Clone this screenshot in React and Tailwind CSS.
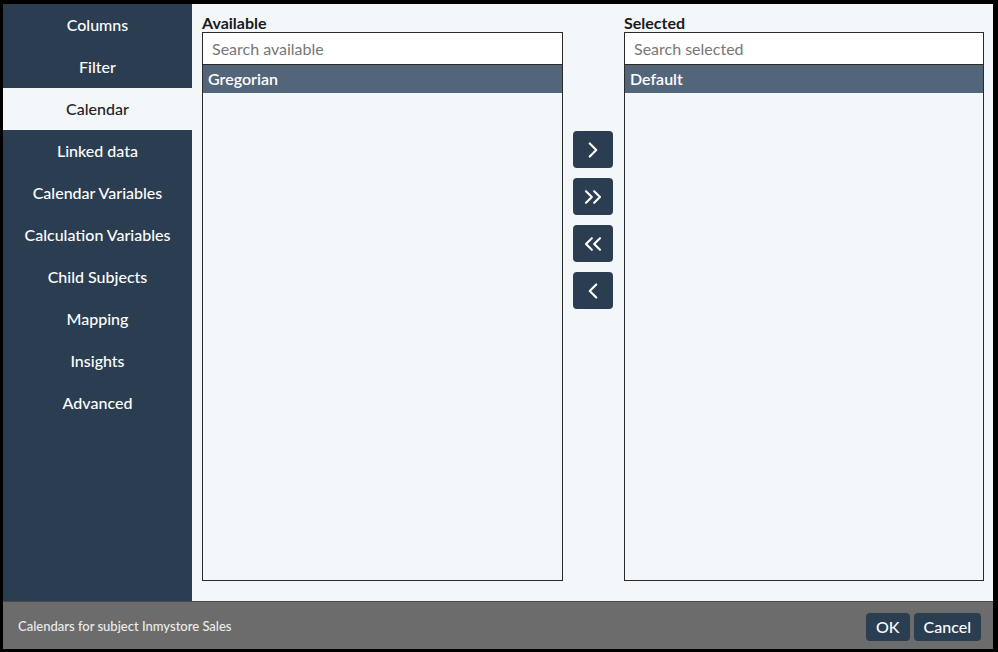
import React, { useState } from "react";
import { ChevronLeft, ChevronRight, ChevronsLeft, ChevronsRight } from "lucide-react";

const NAV = [
  "Columns",
  "Filter",
  "Calendar",
  "Linked data",
  "Calendar Variables",
  "Calculation Variables",
  "Child Subjects",
  "Mapping",
  "Insights",
  "Advanced"
];

function ListBox({ placeholder, items }) {
  return (
    <div className="flex h-[549px] flex-col border border-[#2a2a2a] bg-[#f3f7fa]">
      <input
        className="h-[32px] shrink-0 border-b border-[#2a2a2a] bg-white px-[9px] text-[16px] text-[#333] outline-none placeholder:text-[#777]"
        placeholder={placeholder}
      />
      {items.map((it) => (
        <div
          key={it}
          className="flex h-[28px] items-center bg-[#536579] px-[5px] text-[16px] font-semibold text-white"
        >
          {it}
        </div>
      ))}
    </div>
  );
}

function MoveButton({ children }) {
  return (
    <button className="flex h-[37px] w-[40px] items-center justify-center rounded-[4px] bg-[#2b3d51] text-white">
      {children}
    </button>
  );
}

export default function App() {
  const [page, setPage] = useState("Calendar");

  return (
    <div
      className="flex h-[652px] w-[998px] flex-col bg-black pt-[4px] pb-[3px] pl-[3px] pr-[5px]"
      style={{ fontFamily: "Lato, 'Noto Sans', sans-serif" }}
    >
      <div className="flex min-h-0 flex-1">
        <div className="w-[189px] shrink-0 bg-[#2b3d51]">
          {NAV.map((n) => (
            <button
              key={n}
              onClick={() => setPage(n)}
              className={`flex h-[42px] w-full items-center justify-center text-[16px] font-medium ${
                page === n ? "bg-[#f3f7fa] text-[#222]" : "text-white"
              }`}
            >
              {n}
            </button>
          ))}
        </div>
        <div className="flex flex-1 bg-[#f3f7fa] pt-[10px] pl-[10px]">
          <div className="w-[361px]">
            <div className="h-[18px] text-[16px] font-bold leading-[18px] text-[#1a1a1a]">Available</div>
            <ListBox placeholder="Search available" items={["Gregorian"]} />
          </div>
          <div className="ml-[10px] flex w-[40px] flex-col gap-[10px] pt-[117px]">
            <MoveButton>
              <ChevronRight size={26} strokeWidth={2} />
            </MoveButton>
            <MoveButton>
              <ChevronsRight size={28} strokeWidth={1.8} />
            </MoveButton>
            <MoveButton>
              <ChevronsLeft size={28} strokeWidth={1.8} />
            </MoveButton>
            <MoveButton>
              <ChevronLeft size={26} strokeWidth={2} />
            </MoveButton>
          </div>
          <div className="ml-[11px] w-[360px]">
            <div className="h-[18px] text-[16px] font-bold leading-[18px] text-[#1a1a1a]">Selected</div>
            <ListBox placeholder="Search selected" items={["Default"]} />
          </div>
        </div>
      </div>
      <div className="flex h-[48px] shrink-0 items-center justify-between border-t border-[#4a4a4a] bg-[#6b6c6b] pt-[3px] pl-[15px] pr-[12px]">
        <div className="text-[13px] font-medium text-[#ececec]">Calendars for subject Inmystore Sales</div>
        <div className="flex gap-[4px]">
          <button className="h-[28px] rounded-[4px] bg-[#2b3d51] px-[10px] text-[16px] font-medium text-white">OK</button>
          <button className="h-[28px] rounded-[4px] bg-[#2b3d51] px-[10px] text-[16px] font-medium text-white">Cancel</button>
        </div>
      </div>
    </div>
  );
}
